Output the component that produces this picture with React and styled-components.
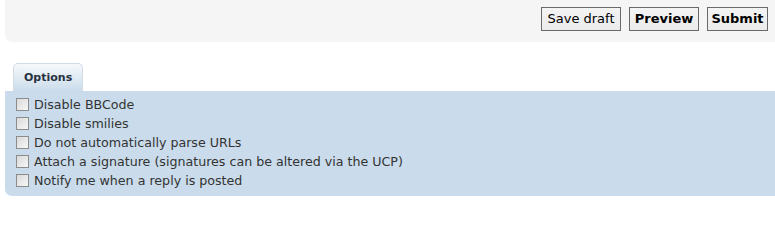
import React from "react";
import styled, { createGlobalStyle } from "styled-components";

const Global = createGlobalStyle`
  html, body { margin: 0; padding: 0; background: #fff; }
  body { font-family: "DejaVu Sans", Verdana, sans-serif; }
`;

const Page = styled.div`
  padding-left: 5px;
`;

const SubmitPanel = styled.div`
  height: 42px;
  box-sizing: border-box;
  background: #f5f5f5;
  border-bottom-left-radius: 7px;
  display: flex;
  justify-content: flex-end;
  align-items: flex-start;
  gap: 8px;
  padding: 7px 7px 0 0;
`;

const Button = styled.button`
  width: ${(p) => p.$w}px;
  height: 24px;
  box-sizing: border-box;
  margin: 0;
  padding: 0;
  text-align: center;
  white-space: nowrap;
  border: 1px solid #6a6a6a;
  border-radius: 0;
  background: linear-gradient(#f4f4f4, #ebebeb);
  color: #000;
  font-family: "DejaVu Sans", Verdana, sans-serif;
  font-size: 13px;
  font-weight: ${(p) => (p.$bold ? 700 : 400)};
  line-height: 22px;
`;

const TabBar = styled.div`
  margin-top: 21px;
  padding-left: 8px;
  display: flex;
`;

const Tab = styled.div`
  height: 28px;
  box-sizing: border-box;
  padding: 0 10px;
  border: 1px solid #d0dbe6;
  border-bottom: none;
  border-radius: 5px 5px 0 0;
  background: linear-gradient(#f6f9fb, #cadceb);
  color: #28313f;
  font-size: 11px;
  font-weight: 700;
  line-height: 27px;
`;

const OptionsPanel = styled.div`
  background: #cadceb;
  border-bottom-left-radius: 7px;
  padding: 4px 0 6px 11px;
  display: flex;
  flex-direction: column;
`;

const Row = styled.label`
  height: 19px;
  display: flex;
  align-items: center;
  color: #333;
  font-size: 12.65px;
  white-space: nowrap;
`;

const Check = styled.input.attrs({ type: "checkbox" })`
  appearance: none;
  -webkit-appearance: none;
  width: 13px;
  height: 13px;
  box-sizing: border-box;
  margin: 0 5px 0 0;
  border: 1px solid #8c8c8c;
  border-radius: 0;
  background: linear-gradient(135deg, #d9d9d9, #f7f7f7);
`;

const options = [
  "Disable BBCode",
  "Disable smilies",
  "Do not automatically parse URLs",
  "Attach a signature (signatures can be altered via the UCP)",
  "Notify me when a reply is posted",
];

export default function App() {
  return (
    <>
      <Global />
      <Page>
        <SubmitPanel>
          <Button $w={80}>Save draft</Button>
          <Button $w={70} $bold>Preview</Button>
          <Button $w={61} $bold>Submit</Button>
        </SubmitPanel>
        <TabBar>
          <Tab>Options</Tab>
        </TabBar>
        <OptionsPanel>
          {options.map((o) => (
            <Row key={o}>
              <Check />
              {o}
            </Row>
          ))}
        </OptionsPanel>
      </Page>
    </>
  );
}
